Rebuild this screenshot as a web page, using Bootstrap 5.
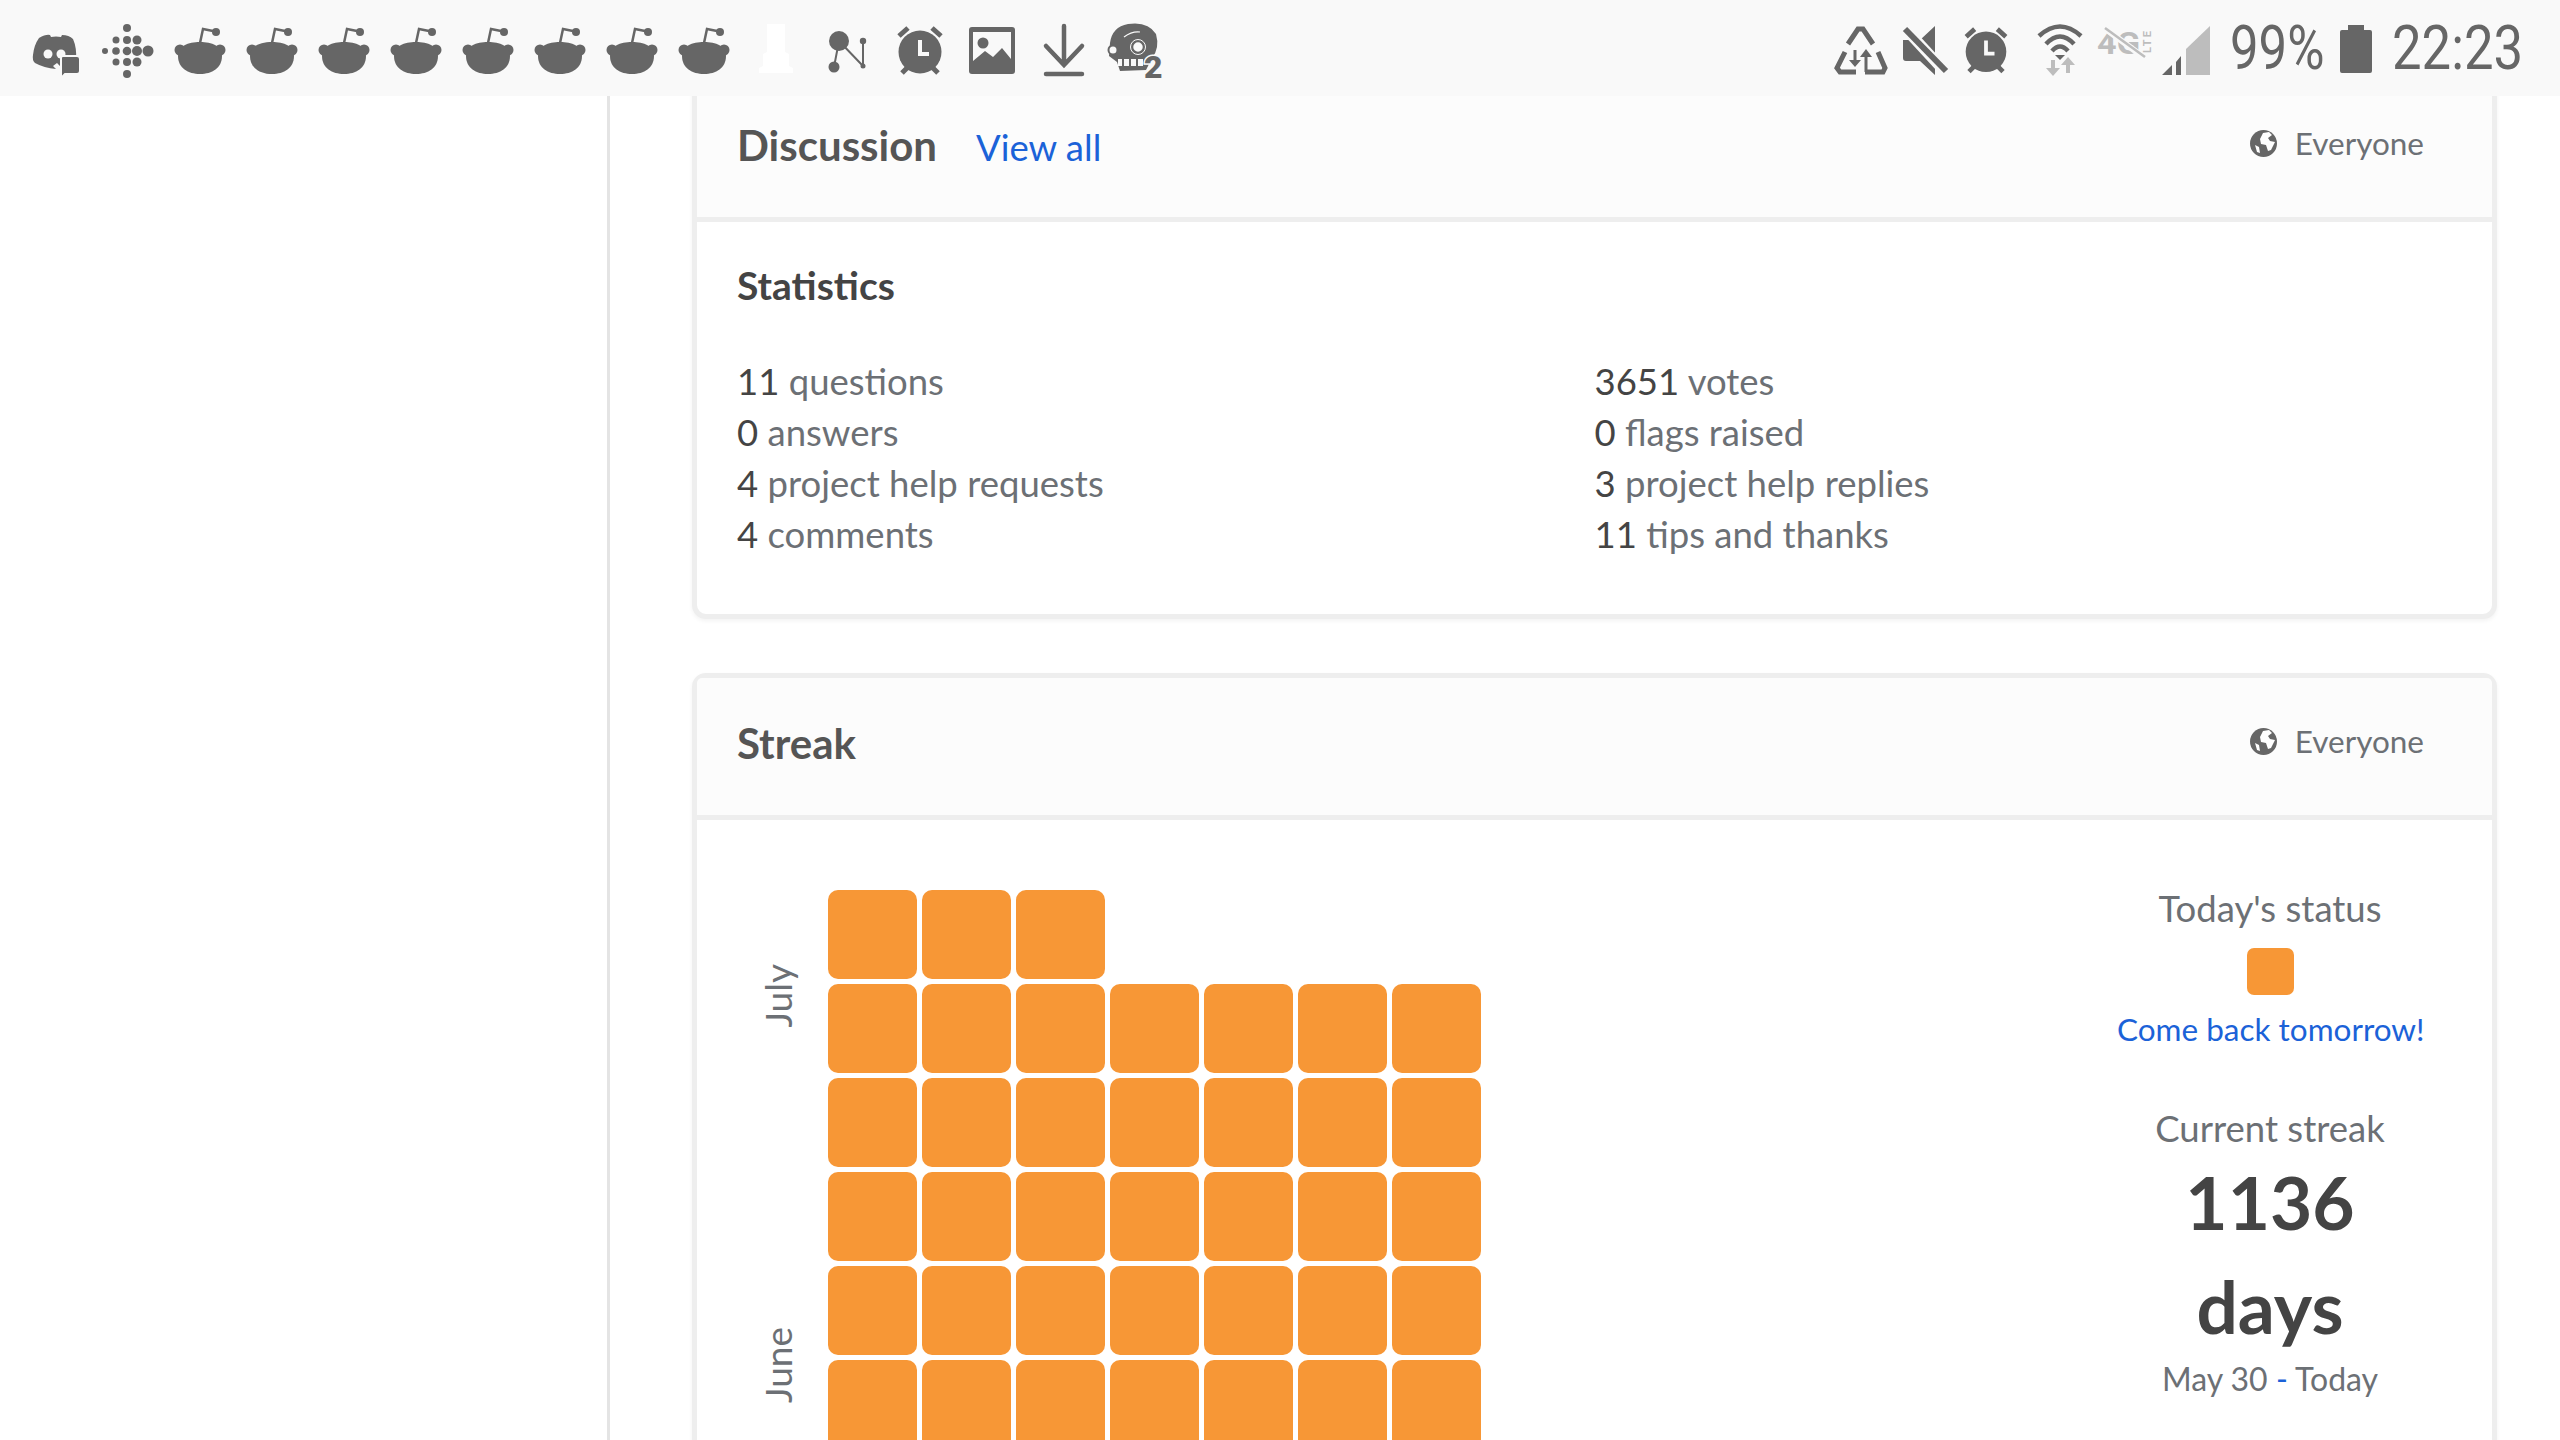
<!DOCTYPE html>
<html lang="en">
<head>
    <meta charset="UTF-8">
    <meta name="viewport" content="width=device-width, initial-scale=1.0">
    <title>Profile</title>
    <link href="https://cdn.jsdelivr.net/npm/bootstrap@5.3.0/dist/css/bootstrap.min.css" rel="stylesheet">
    <style>
        body {
            height: 1440px;
            overflow: hidden;
            background-color: #fff;
            font-family: "Lato", "Liberation Sans", sans-serif;
            color: #6c7075;
        }
        .status-bar {
            height: 96px;
            background-color: #f9f9f9;
            padding-left: 20px;
            padding-right: 39px;
            font-family: "Roboto", "Liberation Sans", sans-serif;
            color: #666;
        }
        .status-bar svg {
            display: block;
            flex-shrink: 0;
        }
        .status-text {
            display: inline-block;
            font-size: 62px;
            font-weight: 400;
            line-height: 96px;
            white-space: nowrap;
            transform-origin: left center;
        }
        .status-pct { width: 110px; margin-left: 8px; transform: scaleX(.82); }
        .status-time { width: 129px; margin-left: 20px; transform: scaleX(.85); }
        .page-body {
            height: 1344px;
            overflow: hidden;
        }
        .side-col {
            width: 610px;
            flex-shrink: 0;
            border-right: 3px solid #e4e4e4;
        }
        .main-col {
            padding-left: 82px;
            padding-right: 63px;
            flex-grow: 1;
            min-width: 0;
        }
        .panel {
            border: 5px solid #eee;
            border-radius: 14px;
            box-shadow: 0 2px 4px rgba(0, 0, 0, .05);
            margin-bottom: 54px;
        }
        .panel-first { margin-top: -21px; }
        .panel .card-header {
            height: 142px;
            padding: 0 68px 6px 40px;
            background-color: #fcfcfc;
            border-bottom: 5px solid #eee;
        }
        .panel-title {
            font-size: 42px;
            font-weight: 700;
            color: #555;
        }
        .panel-link {
            font-size: 36.500px;
            color: #1b62d8;
            text-decoration: none;
            margin-left: 39px;
            padding-top: 4px;
        }
        .audience {
            font-size: 31.500px;
            color: #6c7075;
            margin-top: -4px;
            gap: 18px;
        }
        .stats-body {
            padding: 38px 40px 0;
            height: 392px;
        }
        .stats-title {
            font-size: 39px;
            font-weight: 700;
            color: #444;
            line-height: 50px;
            margin-bottom: 46px;
        }
        .stat-line {
            font-size: 36.500px;
            line-height: 51px;
        }
        .stat-line b {
            font-weight: 400;
            color: #444;
        }
        .streak-body {
            padding: 70px 69px 0 61px;
        }
        .month-col {
            width: 40px;
            margin-right: 30px;
            height: 560px;
        }
        .month-label {
            writing-mode: vertical-rl;
            transform: rotate(180deg);
            font-size: 37px;
            line-height: 40px;
            text-align: left;
        }
        .month-july { margin-top: 74px; }
        .month-june { margin-top: 299px; }
        .day-grid {
            display: grid;
            grid-template-columns: repeat(7, 89px);
            grid-auto-rows: 89px;
            gap: 5px;
        }
        .day-cell {
            background-color: #f79736;
            border-radius: 10px;
        }
        .day-gap { grid-column: span 4; }
        .streak-info {
            width: 306px;
            margin-top: -7px;
            text-align: center;
        }
        .info-line {
            font-size: 36.500px;
            line-height: 50px;
            white-space: nowrap;
        }
        .info-line-gap { margin-top: 49px; }
        .today-box {
            width: 47px;
            height: 47px;
            margin: 15px auto 9px;
            background-color: #f79736;
            border-radius: 7px;
        }
        .tomorrow-link {
            display: block;
            font-size: 31.500px;
            line-height: 50px;
            color: #1b62d8;
            text-decoration: none;
            white-space: nowrap;
        }
        .streak-big {
            font-size: 73px;
            font-weight: 700;
            line-height: 104px;
            color: #444;
        }
        .streak-num { margin-top: -3px; }
        .streak-range {
            font-size: 32px;
            line-height: 40px;
            margin-top: 1px;
        }
        .streak-range span { color: #1b62d8; }
    </style>
</head>
<body>
    <svg width="0" height="0" class="position-absolute">
        <symbol id="snoo" viewBox="0 0 72 96">
            <circle cx="16" cy="50" r="5.5" fill="#666"/>
            <circle cx="56" cy="50" r="5.5" fill="#666"/>
            <path d="M14 56C14 46 24 42 36 42C48 42 58 46 58 56C58 68 48 74 36 74C24 74 14 68 14 56Z" fill="#666"/>
            <path d="M36 43L39 29L49 31" fill="none" stroke="#666" stroke-width="2.5"/>
            <circle cx="52" cy="32" r="4" fill="#666"/>
        </symbol>
        <symbol id="alarm" viewBox="0 0 72 96">
            <circle cx="36" cy="52" r="21.5" fill="#666"/>
            <path d="M15 36L24 28M48 28L57 36M18 73L23 68M49 68L54 73" fill="none" stroke="#666" stroke-width="5"/>
            <path d="M36 40V54H45" fill="none" stroke="#f9f9f9" stroke-width="4"/>
        </symbol>
    </svg>

    <div class="status-bar d-flex align-items-center position-relative">
        <!-- discord -->
        <svg width="72" height="96" viewBox="0 0 72 96">
            <path d="M19 38Q26 34 30 35L31 37Q36 36 41 37L42 35Q49 35 53 39Q57 48 56 60L40 66L37 63L33 66L36 69Q24 68 15 63Q12 60 13 55Q14 45 19 38Z" fill="#666"/>
            <circle cx="28" cy="54" r="4.5" fill="#f9f9f9"/>
            <circle cx="41" cy="54" r="4.5" fill="#f9f9f9"/>
            <path d="M43 56H57Q60 56 60 59V71Q60 74 57 74H45L41 78V58Q41 56 43 56Z" fill="#666" stroke="#f9f9f9" stroke-width="2"/>
        </svg>
        <!-- fitbit -->
        <svg width="72" height="96" viewBox="0 0 72 96" fill="#666">
            <circle cx="35" cy="28" r="4"/>
            <circle cx="24" cy="40" r="3.5"/><circle cx="35" cy="40" r="4"/><circle cx="45" cy="40" r="4.5"/>
            <circle cx="13" cy="51" r="3"/><circle cx="24" cy="51" r="3.8"/><circle cx="35" cy="51" r="4.3"/><circle cx="45" cy="51" r="5"/><circle cx="56" cy="51" r="5.5"/>
            <circle cx="24" cy="62" r="3.5"/><circle cx="35" cy="62" r="4"/><circle cx="45" cy="62" r="4.5"/>
            <circle cx="35" cy="74" r="4"/>
        </svg>
        <svg width="72" height="96"><use href="#snoo"/></svg>
        <svg width="72" height="96"><use href="#snoo"/></svg>
        <svg width="72" height="96"><use href="#snoo"/></svg>
        <svg width="72" height="96"><use href="#snoo"/></svg>
        <svg width="72" height="96"><use href="#snoo"/></svg>
        <svg width="72" height="96"><use href="#snoo"/></svg>
        <svg width="72" height="96"><use href="#snoo"/></svg>
        <svg width="72" height="96"><use href="#snoo"/></svg>
        <!-- building, almost invisible on the bar -->
        <svg width="72" height="96" viewBox="0 0 72 96" fill="#fff">
            <path d="M27 24H45V52L49 54V66L53 68V73H19V68L23 66V54L27 52Z"/>
        </svg>
        <!-- network nodes -->
        <svg width="72" height="96" viewBox="0 0 72 96" fill="#666">
            <path d="M27 41L22 67M27 41L51 66M51 41V66" stroke="#666" stroke-width="2"/>
            <circle cx="27" cy="41" r="10"/><circle cx="22" cy="67" r="5.5"/>
            <circle cx="51" cy="41" r="3.2"/><circle cx="51" cy="66" r="2.5"/>
        </svg>
        <svg width="72" height="96"><use href="#alarm"/></svg>
        <!-- picture -->
        <svg width="72" height="96" viewBox="0 0 72 96">
            <rect x="13" y="27" width="46" height="47" rx="3" fill="#666"/>
            <rect x="17" y="32" width="38" height="38" fill="#f9f9f9"/>
            <path d="M17 61L29 51L37 57L46 48L55 59V71H17Z" fill="#666"/>
            <circle cx="27" cy="43" r="5.5" fill="#666"/>
        </svg>
        <!-- download -->
        <svg width="72" height="96" viewBox="0 0 72 96" fill="none" stroke="#666" stroke-width="4.5" stroke-linecap="round">
            <path d="M36 26V64M18 46L36 65L54 46M18 74H54"/>
        </svg>
        <!-- zombie head -->
        <svg width="72" height="96" viewBox="0 0 72 96">
            <path d="M10 43Q12 27 28 24Q48 21 56 34Q60 48 52 58L46 70L20 71L17 62L9 56Z" fill="#666"/>
            <path d="M24 37Q32 31 40 32" fill="none" stroke="#f9f9f9" stroke-width="1.2"/>
            <circle cx="38" cy="47" r="6" fill="#f9f9f9" stroke="#666" stroke-width="2.5"/>
            <circle cx="38" cy="47" r="7.5" fill="none" stroke="#f9f9f9" stroke-width="1"/>
            <circle cx="13" cy="50" r="4.5" fill="#f9f9f9" stroke="#666" stroke-width="2"/>
            <rect x="18" y="59" width="25" height="7" fill="#f9f9f9"/>
            <path d="M23 59V66M30 59V66M37 59V66" stroke="#666" stroke-width="2"/>
            <text x="44" y="78" font-size="32" font-weight="900" fill="#666" stroke="#f9f9f9" stroke-width="3" paint-order="stroke">2</text>
        </svg>

        <div class="d-flex align-items-center ms-auto">
            <!-- data saver style recycle -->
            <svg width="69" height="96" viewBox="0 0 69 96">
                <path d="M23 44L33 29H38L48 44M20 52L12 68L15 72H31M53 52L60 68L58 72H40" fill="none" stroke="#666" stroke-width="5"/>
                <path d="M28.500 50H31.500V60H36L30 67L24 60H28.500Z" fill="#666"/>
                <path d="M39.500 72V57H35L41 49L47 57H42.500V72Z" fill="#666"/>
            </svg>
            <!-- muted speaker -->
            <svg width="62" height="96" viewBox="0 0 62 96">
                <path d="M9 40H26L41 26V75L26 61H12Q9 61 9 58Z" fill="#666"/>
                <path d="M8 25L56 77" stroke="#f9f9f9" stroke-width="11"/>
                <path d="M11 29L52 71" stroke="#666" stroke-width="6"/>
            </svg>
            <svg width="68" height="96" viewBox="0 0 68 96"><use href="#alarm" x="-4"/></svg>
            <!-- wifi -->
            <svg width="68" height="96" viewBox="0 0 68 96">
                <path d="M15 36Q36 17 57 36M22 44Q36 29 50 44M28 51Q36 42 44 51" fill="none" stroke="#666" stroke-width="4.500"/>
                <path d="M31 55H41L36 60Z" fill="#666"/>
                <path d="M27 60H31V68H36L29 76L22 68H27ZM42 73V65H37L44 57L51 65H46V73Z" fill="#bdbdbd"/>
            </svg>
            <!-- 4G LTE off -->
            <svg width="64" height="96" viewBox="0 0 64 96" fill="#bdbdbd">
                <text x="5" y="54" font-size="32" font-weight="700" textLength="43" lengthAdjust="spacingAndGlyphs">4G</text>
                <text x="0" y="0" font-size="11" font-weight="700" textLength="22" transform="translate(59 53) rotate(-90)">LTE</text>
                <path d="M11 27L54 59" stroke="#f9f9f9" stroke-width="6"/>
                <path d="M13 28L53 57" stroke="#bdbdbd" stroke-width="2.500"/>
            </svg>
            <!-- signal -->
            <svg width="66" height="96" viewBox="0 0 66 96">
                <path d="M6 75L16 65V75ZM20 62L25 56V75H20Z" fill="#666"/>
                <path d="M30 49L54 26V75H30Z" fill="#bdbdbd"/>
            </svg>
            <span class="status-text status-pct">99%</span>
            <svg width="32" height="96" viewBox="0 0 32 96">
                <path d="M8 25H24V30H30Q32 30 32 32V71Q32 73 30 73H2Q0 73 0 71V32Q0 30 2 30H8Z" fill="#666"/>
            </svg>
            <span class="status-text status-time">22:23</span>
        </div>
    </div>

    <div class="page-body d-flex">
        <div class="side-col"></div>
        <div class="main-col">
            <!-- Discussion / statistics card -->
            <div class="card panel panel-first">
                <div class="card-header d-flex align-items-center justify-content-between">
                    <div class="d-flex align-items-center">
                        <span class="panel-title">Discussion</span>
                        <a href="#" class="panel-link">View all</a>
                    </div>
                    <div class="audience d-flex align-items-center">
                        <svg width="27" height="27" viewBox="0 0 27 27">
                            <circle cx="13.500" cy="13.500" r="13.500" fill="#666"/>
                            <path d="M13 3L19 2L22 5L18 8L20 11L25 12L21 20L18 21L16 15L11 14L10 9ZM5 15L9 17L10 23L7 22Z" fill="#fff"/>
                        </svg>
                        <span>Everyone</span>
                    </div>
                </div>
                <div class="stats-body">
                    <div class="stats-title">Statistics</div>
                    <div class="row g-0">
                        <div class="col-6">
                            <div class="stat-line"><b>11</b> questions</div>
                            <div class="stat-line"><b>0</b> answers</div>
                            <div class="stat-line"><b>4</b> project help requests</div>
                            <div class="stat-line"><b>4</b> comments</div>
                        </div>
                        <div class="col-6">
                            <div class="stat-line"><b>3651</b> votes</div>
                            <div class="stat-line"><b>0</b> flags raised</div>
                            <div class="stat-line"><b>3</b> project help replies</div>
                            <div class="stat-line"><b>11</b> tips and thanks</div>
                        </div>
                    </div>
                </div>
            </div>

            <!-- Streak card -->
            <div class="card panel">
                <div class="card-header d-flex align-items-center justify-content-between">
                    <span class="panel-title">Streak</span>
                    <div class="audience d-flex align-items-center">
                        <svg width="27" height="27" viewBox="0 0 27 27">
                            <circle cx="13.500" cy="13.500" r="13.500" fill="#666"/>
                            <path d="M13 3L19 2L22 5L18 8L20 11L25 12L21 20L18 21L16 15L11 14L10 9ZM5 15L9 17L10 23L7 22Z" fill="#fff"/>
                        </svg>
                        <span>Everyone</span>
                    </div>
                </div>
                <div class="streak-body d-flex">
                    <div class="month-col d-flex flex-column align-items-center">
                        <div class="month-label month-july">July</div>
                        <div class="month-label month-june">June</div>
                    </div>
                    <div id="dayGrid" class="day-grid"></div>
                    <div class="streak-info ms-auto">
                        <div class="info-line">Today's status</div>
                        <div class="today-box"></div>
                        <a href="#" class="tomorrow-link">Come back tomorrow!</a>
                        <div class="info-line info-line-gap">Current streak</div>
                        <div class="streak-big streak-num">1136</div>
                        <div class="streak-big">days</div>
                        <div class="streak-range">May 30 <span>-</span> Today</div>
                    </div>
                </div>
            </div>
        </div>
    </div>

    <script src="https://cdn.jsdelivr.net/npm/bootstrap@5.3.0/dist/js/bootstrap.bundle.min.js"></script>
    <script>
        // Fill the streak calendar: three days in the newest week, then full weeks
        const dayGrid = document.getElementById('dayGrid');
        let cells = '<div class="day-cell"></div>'.repeat(3) + '<div class="day-gap"></div>';
        cells += '<div class="day-cell"></div>'.repeat(35);
        dayGrid.innerHTML = cells;
    </script>
</body>
</html>
